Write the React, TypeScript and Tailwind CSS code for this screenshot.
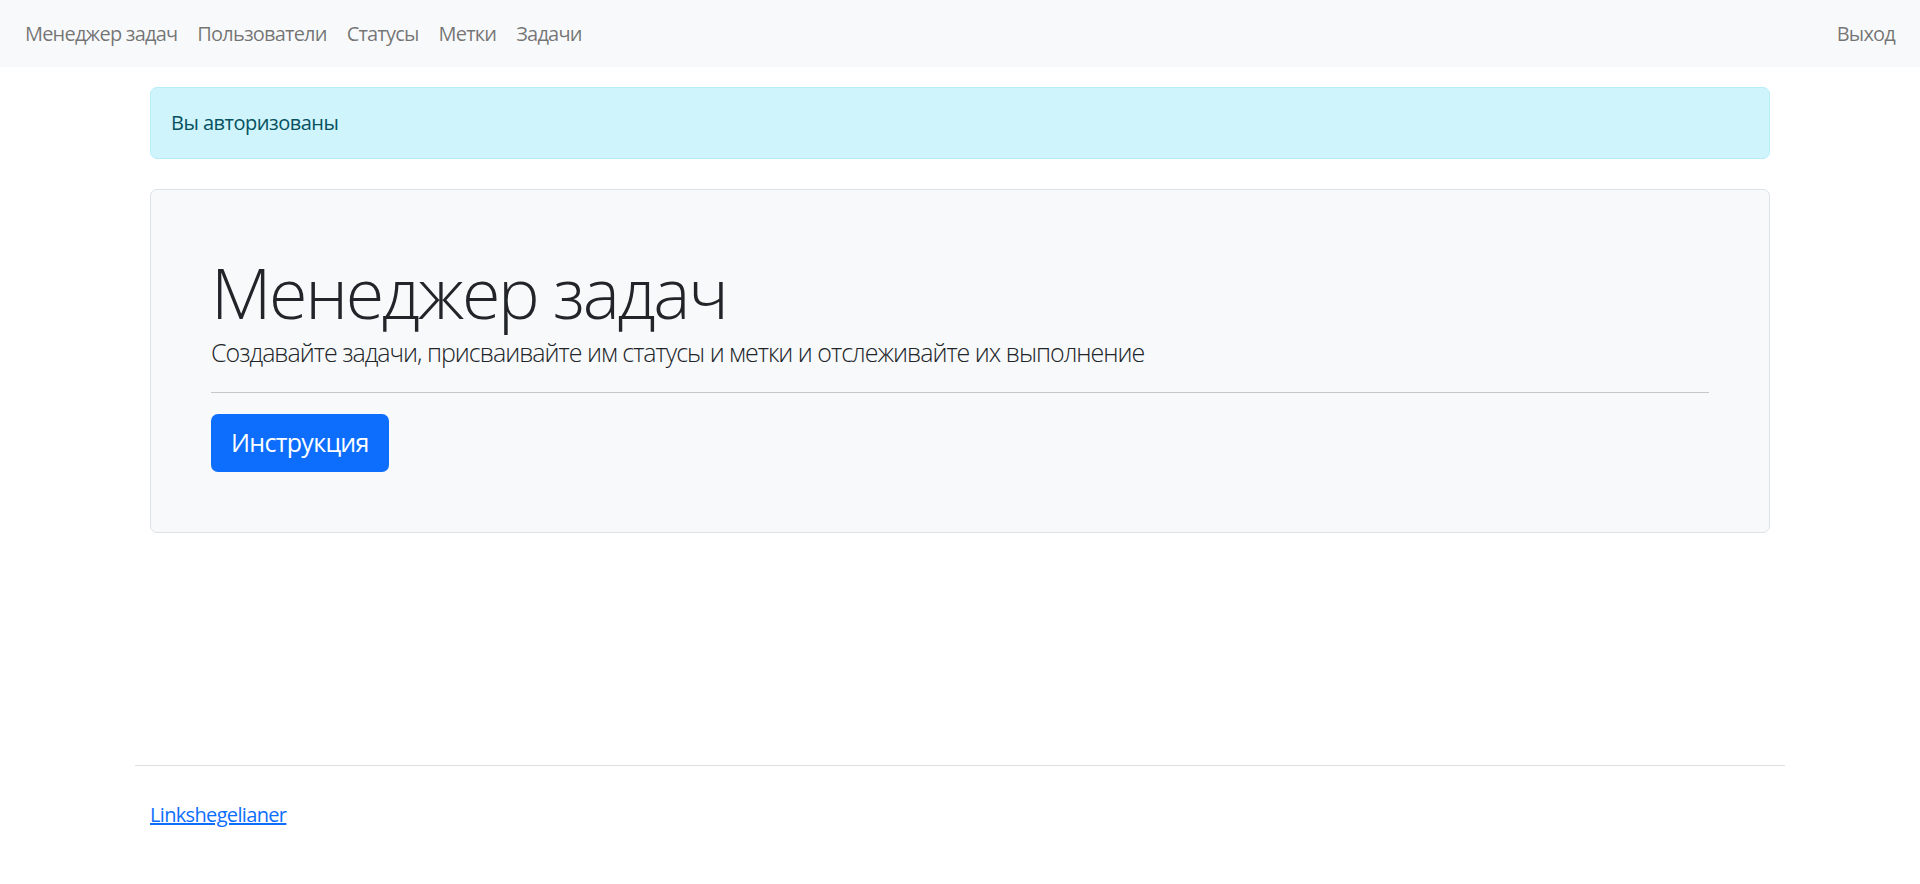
const navLinks = ["Менеджер задач", "Пользователи", "Статусы", "Метки", "Задачи"];

function Navbar() {
  return (
    <nav className="h-[67px] bg-[#f8f9fa] flex items-center justify-between px-[15px]">
      <ul className="flex flex-row items-center">
        {navLinks.map((link) => (
          <li key={link} className="px-[10px] text-[20px] leading-[30px] tracking-[-0.04em] text-[rgba(0,0,0,0.55)]">
            {link}
          </li>
        ))}
      </ul>
      <div className="px-[10px] text-[20px] leading-[30px] tracking-[-0.04em] text-[rgba(0,0,0,0.55)]">Выход</div>
    </nav>
  );
}

function Hero() {
  return (
    <div className="mt-[30px] bg-[#f8f9fa] border border-[#dee2e6] rounded-[7px] p-[60px]">
      <h1 className="text-[70px] leading-[84px] font-light tracking-[-0.033em] text-[#212529]">Менеджер задач</h1>
      <p className="text-[25px] leading-[37px] font-light tracking-[-0.04em] text-[#212529]">
        Создавайте задачи, присваивайте им статусы и метки и отслеживайте их выполнение
      </p>
      <hr className="my-[21px] border-t border-[#c6c7c8]" />
      <button className="h-[58px] px-[20px] bg-[#0d6efd] text-white text-[25px] tracking-[-0.028em] rounded-[7px]">
        Инструкция
      </button>
    </div>
  );
}

export default function App() {
  return (
    <div className="min-h-screen flex flex-col bg-white font-['Open_Sans',sans-serif]">
      <Navbar />
      <main className="w-[1650px] mx-auto px-[15px] pt-[20px]">
        <div className="h-[72px] flex items-center px-[20px] bg-[#cff4fc] border border-[#b6effb] rounded-[7px] text-[20px] tracking-[-0.025em] text-[#055160]">
          Вы авторизованы
        </div>
        <Hero />
      </main>
      <footer className="mt-auto w-[1650px] mx-auto">
        <hr className="border-t border-[#dedede]" />
        <div className="px-[15px] pt-[34px] pb-[54px]">
          <a href="#" className="text-[20px] leading-[30px] tracking-[-0.033em] text-[#0d6efd] underline">
            Linkshegelianer
          </a>
        </div>
      </footer>
    </div>
  );
}
